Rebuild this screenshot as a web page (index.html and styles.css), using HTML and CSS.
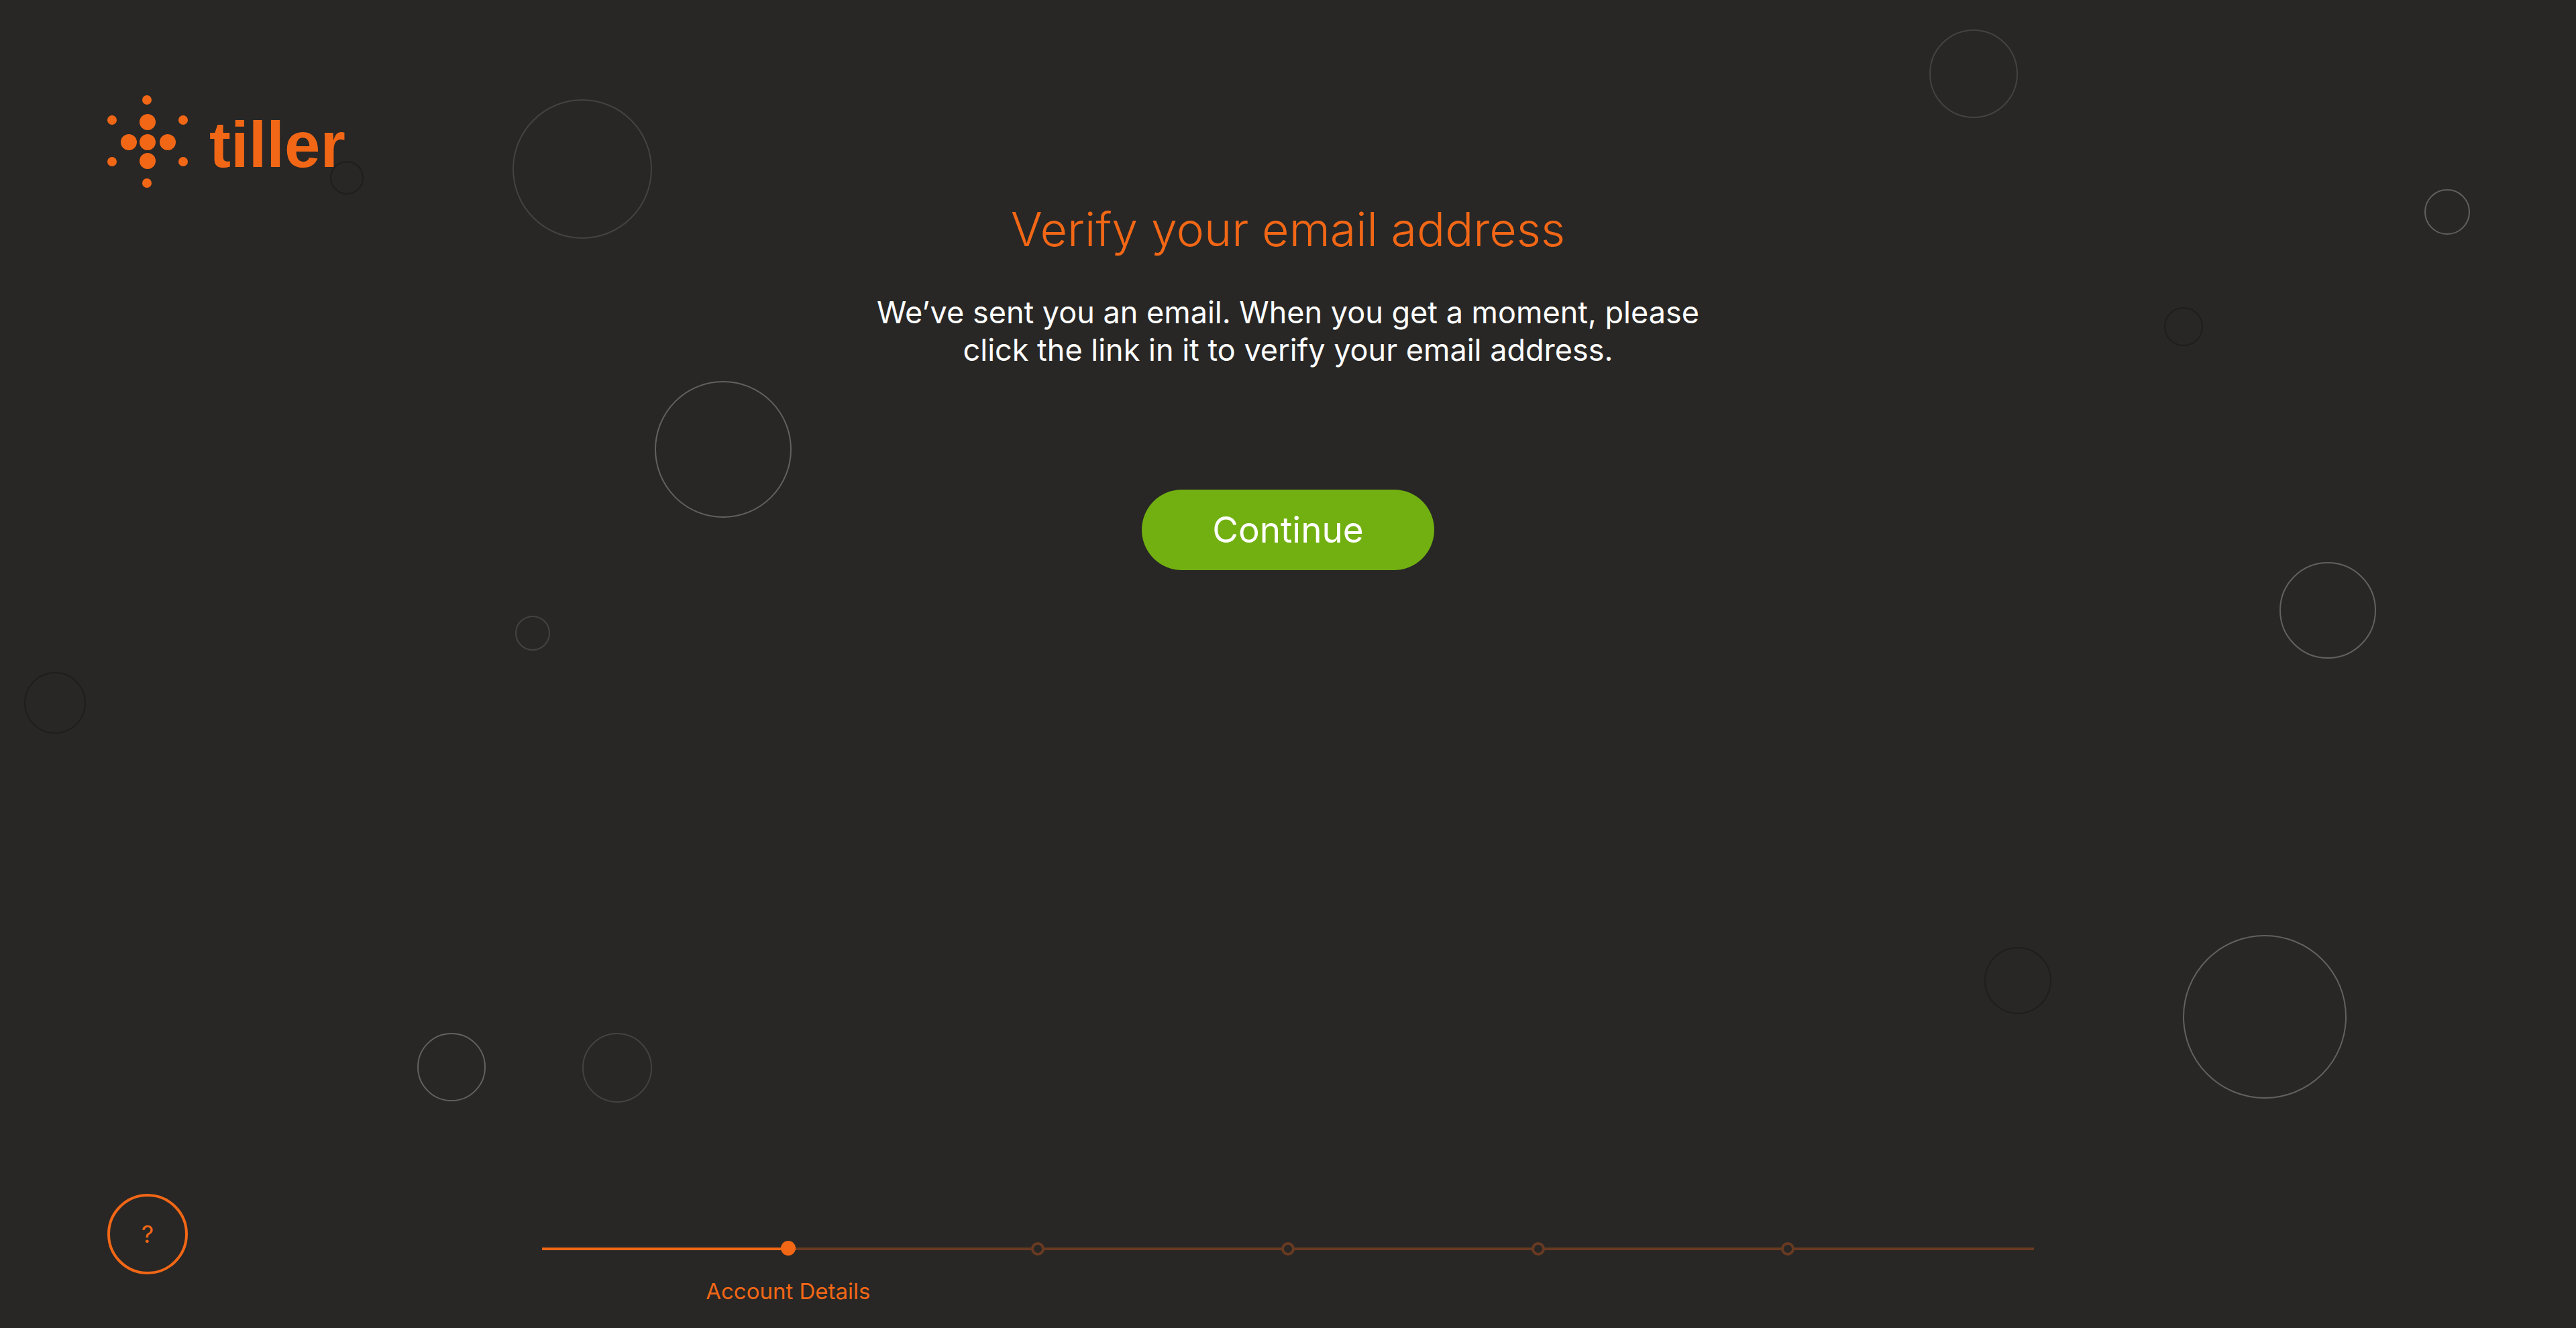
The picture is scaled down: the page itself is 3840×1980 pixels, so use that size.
FILE: index.html
```html
<!DOCTYPE html>
<html lang="en">
<head>
<meta charset="utf-8">
<meta name="viewport" content="width=device-width, initial-scale=1">
<title>Verify your email address</title>
<link rel="stylesheet" href="styles.css">
</head>
<body>
<div class="page">
  <div class="bubbles" aria-hidden="true">
    <span class="bubble dark bubble-1"></span>
    <span class="bubble dim bubble-2"></span>
    <span class="bubble bright bubble-3"></span>
    <span class="bubble dim bubble-4"></span>
    <span class="bubble dark bubble-5"></span>
    <span class="bubble bright bubble-6"></span>
    <span class="bubble dim bubble-7"></span>
    <span class="bubble dim bubble-8"></span>
    <span class="bubble bright bubble-9"></span>
    <span class="bubble dark bubble-10"></span>
    <span class="bubble bright bubble-11"></span>
    <span class="bubble dark bubble-12"></span>
    <span class="bubble bright bubble-13"></span>
  </div>

  <header class="header">
    <a class="logo" href="#">
      <svg class="logo-mark" viewBox="0 0 120 138" aria-hidden="true">
        <circle cx="59" cy="7" r="7"/>
        <circle cx="7" cy="37" r="7"/>
        <circle cx="113" cy="37" r="7"/>
        <circle cx="7" cy="99" r="7"/>
        <circle cx="113" cy="99" r="7"/>
        <circle cx="59" cy="131" r="7"/>
        <circle cx="60" cy="40" r="12"/>
        <circle cx="32" cy="70" r="12"/>
        <circle cx="60" cy="70" r="12"/>
        <circle cx="90" cy="70" r="12"/>
        <circle cx="60" cy="98" r="12"/>
      </svg>
      <span class="logo-word">tiller</span>
    </a>
  </header>

  <main class="main">
    <h1 class="title">Verify your email address</h1>
    <p class="message">We’ve sent you an email. When you get a moment, please<br>click the link in it to verify your email address.</p>
    <button class="continue" type="button">Continue</button>
  </main>

  <footer class="footer">
    <button class="help" type="button" aria-label="Help">?</button>
    <ol class="steps">
      <li class="step" aria-current="step"><span class="dot dot-active"></span><span class="step-label">Account Details</span></li>
      <li class="step"><span class="dot"></span></li>
      <li class="step"><span class="dot"></span></li>
      <li class="step"><span class="dot"></span></li>
      <li class="step"><span class="dot"></span></li>
    </ol>
  </footer>
</div>
</body>
</html>
```
FILE: styles.css
```css
:root {
  --bg: #282725;
  --orange: #f26716;
  --orange-dim: #683a22;
  --green: #72b012;
}

* { box-sizing: border-box; }

body {
  margin: 0;
  background: var(--bg);
  color: #fff;
  font-family: Inter, "Open Sans", sans-serif;
}

button {
  padding: 0;
  font-family: inherit;
  cursor: pointer;
}

.page {
  display: flex;
  flex-direction: column;
  min-height: 100vh;
  position: relative;
  z-index: 0;
  overflow: hidden;
}

/* Decorative circles scattered over the backdrop */
.bubbles {
  position: absolute;
  inset: 0;
  z-index: -1;
  pointer-events: none;
}

.bubble {
  position: absolute;
  aspect-ratio: 1;
  border: 2px solid;
  border-radius: 50%;
}

.bright { border-color: #62615f; }
.dim { border-color: #444341; }
.dark { border-color: #1f1e1c; }

.bubble-1 { left: 492px; top: 240px; width: 50px; }
.bubble-2 { left: 764px; top: 148px; width: 208px; }
.bubble-3 { left: 976px; top: 568px; width: 204px; }
.bubble-4 { left: 768px; top: 918px; width: 52px; }
.bubble-5 { left: 36px; top: 1002px; width: 92px; }
.bubble-6 { left: 622px; top: 1540px; width: 102px; }
.bubble-7 { left: 868px; top: 1540px; width: 104px; }
.bubble-8 { right: 832px; top: 44px; width: 132px; }
.bubble-9 { right: 158px; top: 282px; width: 68px; }
.bubble-10 { right: 556px; top: 458px; width: 58px; }
.bubble-11 { right: 298px; top: 838px; width: 144px; }
.bubble-12 { right: 782px; top: 1412px; width: 100px; }
.bubble-13 { right: 342px; top: 1394px; width: 244px; }

.header {
  display: flex;
  padding: 142px 160px 0;
}

.logo {
  display: flex;
  align-items: center;
  gap: 32px;
  color: var(--orange);
  text-decoration: none;
}

.logo-mark {
  width: 120px;
  height: 138px;
  fill: currentColor;
}

.logo-word {
  padding-top: 10px;
  font: 700 96px/128px "Liberation Sans", Arial, sans-serif;
}

.main {
  display: flex;
  flex: 1;
  flex-direction: column;
  align-items: center;
  padding: 18px 40px;
  text-align: center;
}

.title {
  margin: 0;
  color: var(--orange);
  font-size: 70px;
  font-weight: 300;
  line-height: 88px;
}

.message {
  margin: 52px 0 0;
  font-size: 45px;
  font-weight: 400;
  line-height: 56px;
}

.continue {
  width: 436px;
  height: 120px;
  margin-top: 180px;
  border: 0;
  border-radius: 60px;
  background: var(--green);
  color: #fff;
  font-size: 53px;
  font-weight: 400;
}

.footer {
  display: grid;
  grid-template-columns: 1fr minmax(0, 2224px) 1fr;
  align-items: start;
  padding-bottom: 35px;
}

.help {
  width: 120px;
  height: 120px;
  margin-left: 160px;
  border: 4px solid var(--orange);
  border-radius: 50%;
  background: transparent;
  color: var(--orange);
  font-size: 36px;
}

.steps {
  display: flex;
  justify-content: space-between;
  margin: 70px 0 0;
  padding: 0 16%;
  list-style: none;
  background:
    linear-gradient(var(--orange), var(--orange)) 0 10px / 17% 4px no-repeat,
    linear-gradient(var(--orange-dim), var(--orange-dim)) 0 10px / 100% 4px no-repeat;
}

.step {
  display: flex;
  flex-direction: column;
  align-items: center;
  width: 22px;
}

.dot {
  width: 20px;
  height: 20px;
  margin: 2px 0 0;
  border: 4px solid var(--orange-dim);
  border-radius: 50%;
  background: var(--bg);
}

.dot-active {
  width: 22px;
  height: 22px;
  margin: 0;
  border: 0;
  background: var(--orange);
}

.step-label {
  margin-top: 33px;
  color: var(--orange);
  font-size: 33px;
  font-weight: 400;
  line-height: 40px;
  white-space: nowrap;
}
```
